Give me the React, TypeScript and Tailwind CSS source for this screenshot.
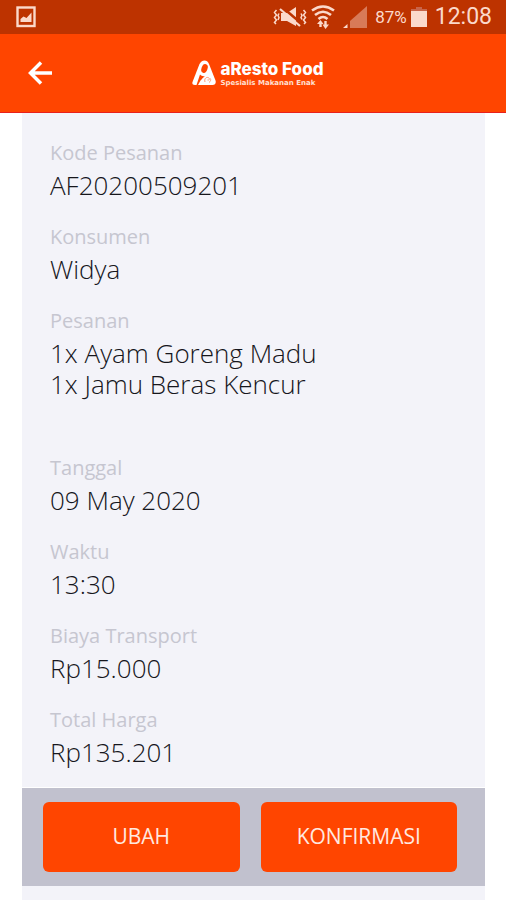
import { ReactNode } from "react";

const fields = [
  { label: "Kode Pesanan", lines: ["AF20200509201"] },
  { label: "Konsumen", lines: ["Widya"] },
  { label: "Pesanan", lines: ["1x Ayam Goreng Madu", "1x Jamu Beras Kencur"], spaced: true },
  { label: "Tanggal", lines: ["09 May 2020"] },
  { label: "Waktu", lines: ["13:30"] },
  { label: "Biaya Transport", lines: ["Rp15.000"] },
  { label: "Total Harga", lines: ["Rp135.201"] },
];

const StatusBar = () => (
  <div className="flex h-[34px] items-center bg-[#bd3300] pl-4 pr-[14px] font-['Roboto',sans-serif] text-[#fbd9cb]">
    <svg className="h-[22px] w-5" viewBox="0 0 20 22" fill="none">
      <rect x="1.5" y="1.5" width="17" height="18.5" stroke="currentColor" strokeWidth="2.4" />
      <path d="M4.5 16V13l3-2.5 3 1.5 5-5.500V16z" fill="currentColor" />
    </svg>
    <div className="ml-auto flex items-center">
      {/* muted, vibrating */}
      <svg className="h-6 w-[34px]" viewBox="0 0 34 24" fill="none" stroke="currentColor">
        <path d="M8 8h6l9-6v19l-9-5H8z" fill="currentColor" stroke="none" />
        <path d="M9 2l20 17" stroke="#bd3300" strokeWidth="2.5" />
        <path d="M7 4l20 17" strokeWidth="2.2" />
        <path d="M3.500 5L1.500 7.500 3.500 10 1.500 12.500 3.500 15 1.500 17.500 3 19M6 8.500L5 10.500 6 12.500 5 15" strokeWidth="1.500" />
        <path d="M30.500 5l2 2.500-2 2.500 2 2.500-2 2.500 2 2.500-1.500 1.500M28 8.500l1 2-1 2 1 2" strokeWidth="1.500" />
      </svg>
      <svg className="ml-1 h-6 w-6" viewBox="0 0 24 24" fill="none" stroke="currentColor">
        <path d="M1 5.500q11-8 22 0M4 10q8-6.500 16 0M7.500 14q4.500-4 9 0" strokeWidth="2.600" />
        <path d="M9.500 22v-5M14.500 16v5" strokeWidth="2.400" />
        <path d="M6 19l3.500-4 3 4zM11.500 19.500l3 4.500 3.500-4.500z" fill="currentColor" stroke="none" />
      </svg>
      <svg className="ml-2 h-[22px] w-6" viewBox="0 0 24 22">
        <path d="M24 0v22H7V15z" fill="#d87a58" />
        <path d="M0 22l4.500-4v4z" fill="currentColor" />
      </svg>
      <span className="ml-2 text-[17px] leading-6">87%</span>
      <svg className="ml-1 h-5 w-4" viewBox="0 0 16 20">
        <path d="M5 0h6v2h5v2H0V2h5z" fill="#c8654a" />
        <path d="M0 4h16v16H0z" fill="currentColor" />
      </svg>
      <span className="ml-2 text-[23px] leading-7">12:08</span>
    </div>
  </div>
);

const Logo = () => (
  <div className="flex items-center gap-1 text-white">
    <svg className="h-[26px] w-6" viewBox="0 0 24 26">
      <path
        fill="currentColor"
        d="M7.500 4C9 1.500 10.500.5 12.500.5S16 1.500 17 4l6.500 16.500c.8 3-.5 4.500-3 4.500H8.500L3 25C.5 25 0 23.500.5 22z"
      />
      <ellipse cx="12.500" cy="8.500" rx="3" ry="4.500" transform="rotate(20 12.500 8.500)" fill="#ff4500" />
      <path d="M8 14.500c1.500 1.500 3 2 5 1.500-2 1.500-3 3-4.500 4.500L6 25H4.500z" fill="#ff4500" />
      <path d="M13 22c-1-3 1-5 3-4.500s2 3-.5 2.500M17 22.500c1.500-1 2-2.500 1.500-4" fill="none" stroke="#ff9b78" />
    </svg>
    <div>
      <p className="font-['Inter',sans-serif] text-[17px] font-extrabold leading-5">aResto Food</p>
      <p className="font-['DejaVu_Sans',sans-serif] text-[7px] font-bold leading-2 text-[#ffe0d3]">Spesialis Makanan Enak</p>
    </div>
  </div>
);

const ActionButton = ({ children }: { children: ReactNode }) => (
  <button type="button" className="h-[70px] flex-1 rounded-md bg-[#ff4500] text-[21px] font-normal text-[#ffe9e0]">
    {children}
  </button>
);

const App = () => {
  return (
    <div className="flex min-h-screen flex-col bg-white font-['Open_Sans',sans-serif]">
      <StatusBar />
      <header className="grid h-[79px] grid-cols-[1fr_auto_1fr] items-center border-b border-[#e8201c] bg-[#ff4500] pl-7 pr-[18px]">
        <button type="button" aria-label="Kembali" className="justify-self-start text-white">
          <svg className="h-6 w-6" viewBox="0 0 24 24" fill="none" stroke="currentColor" strokeWidth="3.5">
            <path d="M13 1.500L2.500 12 13 22.500M2.500 12H24" />
          </svg>
        </button>
        <Logo />
      </header>
      <main className="ml-[22px] mr-[21px] flex-1 bg-[#f3f3f9]">
        <dl className="px-7 pt-[27px]">
          {fields.map((field) => (
            <div key={field.label} className={field.spaced ? "mb-[55px]" : "mb-[23px]"}>
              <dt className="mb-1 text-[20px] leading-[26px] text-[#c6c6d0]">{field.label}</dt>
              {field.lines.map((line) => (
                <dd key={line} className="text-[26px] font-light leading-[31px] text-[#16161c]">
                  {line}
                </dd>
              ))}
            </div>
          ))}
        </dl>
        <div className="-mt-1 flex gap-[21px] border-t border-white bg-[#c1c1ce] py-[14px] pl-[21px] pr-7">
          <ActionButton>UBAH</ActionButton>
          <ActionButton>KONFIRMASI</ActionButton>
        </div>
      </main>
    </div>
  );
};

export default App;
